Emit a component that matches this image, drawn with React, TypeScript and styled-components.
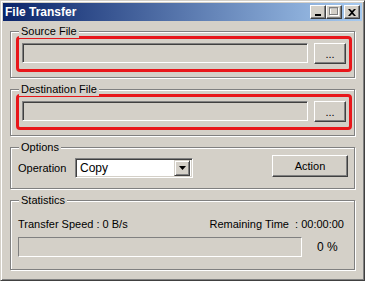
import React from 'react'
import styled, { createGlobalStyle } from 'styled-components'

const GlobalStyle = createGlobalStyle`
  html, body {
    margin: 0;
    padding: 0;
    background: #d4d0c8;
  }
  body {
    font-family: "Liberation Sans", Arial, sans-serif;
    font-size: 11px;
    color: #000;
  }
`

const Window = styled.div`
  width: 365px;
  height: 281px;
  box-sizing: border-box;
  background: #d4d0c8;
  border: 1px solid;
  border-color: #d4d0c8 #404040 #404040 #d4d0c8;
  box-shadow: inset 1px 1px 0 #fff, inset -1px -1px 0 #808080;
  padding: 2px;
  display: flex;
  flex-direction: column;
`

const TitleBar = styled.div`
  height: 18px;
  flex-shrink: 0;
  display: flex;
  align-items: center;
  padding: 0 2px 0 2px;
  background: linear-gradient(to right, #0a246a, #a6caf0);
`

const Title = styled.span`
  flex: 1;
  color: #fff;
  font-weight: bold;
  font-size: 12px;
`

const CaptionButton = styled.div<{ $gap?: boolean }>`
  width: 16px;
  height: 14px;
  box-sizing: border-box;
  margin-left: ${p => (p.$gap ? '2px' : '0')};
  background: #d4d0c8;
  border: 1px solid;
  border-color: #fff #404040 #404040 #fff;
  box-shadow: inset -1px -1px 0 #808080;
  display: flex;
  align-items: center;
  justify-content: center;
`

const Client = styled.div`
  flex: 1;
  display: flex;
  flex-direction: column;
  gap: 11px;
  padding: 10px 7px 0 7px;
`

const Group = styled.div<{ $pad: string }>`
  position: relative;
  border: 1px solid #808080;
  box-shadow: 1px 1px 0 #fff, inset 1px 1px 0 #fff;
  padding: ${p => p.$pad};
`

const Caption = styled.span`
  position: absolute;
  top: -7px;
  left: 8px;
  padding: 0 2px;
  line-height: 13px;
  background: #d4d0c8;
`

const Highlight = styled.div`
  border: 3px solid #e8161a;
  border-radius: 4px;
  padding: 4px 3px 5px 3px;
  display: flex;
  gap: 6px;
`

const PathBox = styled.div`
  flex: 1;
  height: 20px;
  box-sizing: border-box;
  background: #d4d0c8;
  border: 1px solid;
  border-color: #808080 #fff #fff #808080;
  box-shadow: inset 1px 1px 0 #404040, inset -1px -1px 0 #d4d0c8;
`

const Button = styled.button<{ $w: number; $h: number }>`
  width: ${p => p.$w}px;
  height: ${p => p.$h}px;
  box-sizing: border-box;
  padding: 0;
  font-family: inherit;
  font-size: 11px;
  color: #000;
  background: #d4d0c8;
  border: 1px solid;
  border-color: #fff #404040 #404040 #fff;
  box-shadow: inset -1px -1px 0 #808080;
`

const Row = styled.div`
  display: flex;
  align-items: flex-start;
`

const Label = styled.span<{ $w?: number }>`
  width: ${p => (p.$w ? `${p.$w}px` : 'auto')};
  line-height: 14px;
`

const Combo = styled.div`
  width: 118px;
  height: 20px;
  margin-top: 3px;
  box-sizing: border-box;
  background: #fff;
  border: 1px solid;
  border-color: #808080 #fff #fff #808080;
  box-shadow: inset 1px 1px 0 #404040, inset -1px -1px 0 #d4d0c8;
  padding: 2px;
  display: flex;
  align-items: center;
`

const ComboText = styled.span`
  flex: 1;
  padding-left: 2px;
  font-size: 12px;
`

const ComboArrow = styled.div`
  width: 16px;
  height: 16px;
  box-sizing: border-box;
  background: #d4d0c8;
  border: 1px solid;
  border-color: #d4d0c8 #404040 #404040 #d4d0c8;
  box-shadow: inset 1px 1px 0 #fff, inset -1px -1px 0 #808080;
  display: flex;
  align-items: center;
  justify-content: center;
`

const Spacer = styled.div`
  flex: 1;
`

const StatsLine = styled.div`
  display: flex;
  justify-content: space-between;
  padding-right: 10px;
  line-height: 14px;
`

const ProgressRow = styled.div`
  display: flex;
  align-items: center;
  margin-top: 6px;
`

const Progress = styled.div`
  width: 284px;
  height: 20px;
  box-sizing: border-box;
  border: 1px solid;
  border-color: #808080 #fff #fff #808080;
`

const Percent = styled.span`
  margin-left: 15px;
  font-size: 12px;
`

function FileGroup({ caption }: { caption: string }) {
  return (
    <Group $pad="4px 2px 5px 5px">
      <Caption>{caption}</Caption>
      <Highlight>
        <PathBox />
        <Button $w={32} $h={21}>...</Button>
      </Highlight>
    </Group>
  )
}

export default function App() {
  return (
    <>
      <GlobalStyle />
      <Window>
        <TitleBar>
          <Title>File Transfer</Title>
          <CaptionButton>
            <svg width="8" height="8" viewBox="0 0 8 8">
              <rect x="1" y="6" width="6" height="2" fill="#000" />
            </svg>
          </CaptionButton>
          <CaptionButton>
            <svg width="10" height="10" viewBox="0 0 10 10">
              <rect x="1.5" y="1.5" width="8" height="7" fill="none" stroke="#fff" />
              <rect x="0.5" y="0.5" width="8" height="7" fill="none" stroke="#808080" />
              <rect x="0" y="0.5" width="9" height="1" fill="#808080" />
            </svg>
          </CaptionButton>
          <CaptionButton $gap>
            <svg width="8" height="7" viewBox="0 0 8 7">
              <path d="M0 0h2l2 2 2-2h2L5 3.5 8 7H6L4 5 2 7H0l3-3.5z" fill="#000" />
            </svg>
          </CaptionButton>
        </TitleBar>
        <Client>
          <FileGroup caption="Source File" />
          <FileGroup caption="Destination File" />
          <Group $pad="7px 6px 10px 7px">
            <Caption>Options</Caption>
            <Row>
              <Label $w={57} style={{ marginTop: 6 }}>Operation</Label>
              <Combo>
                <ComboText>Copy</ComboText>
                <ComboArrow>
                  <svg width="7" height="4" viewBox="0 0 7 4">
                    <path d="M0 0h7L3.5 4z" fill="#000" />
                  </svg>
                </ComboArrow>
              </Combo>
              <Spacer />
              <Button $w={76} $h={22}>Action</Button>
            </Row>
          </Group>
          <Group $pad="16px 0 12px 7px">
            <Caption>Statistics</Caption>
            <StatsLine>
              <Label>Transfer Speed : 0 B/s</Label>
              <Label>Remaining Time&nbsp; : 00:00:00</Label>
            </StatsLine>
            <ProgressRow>
              <Progress />
              <Percent>0 %</Percent>
            </ProgressRow>
          </Group>
        </Client>
      </Window>
    </>
  )
}
